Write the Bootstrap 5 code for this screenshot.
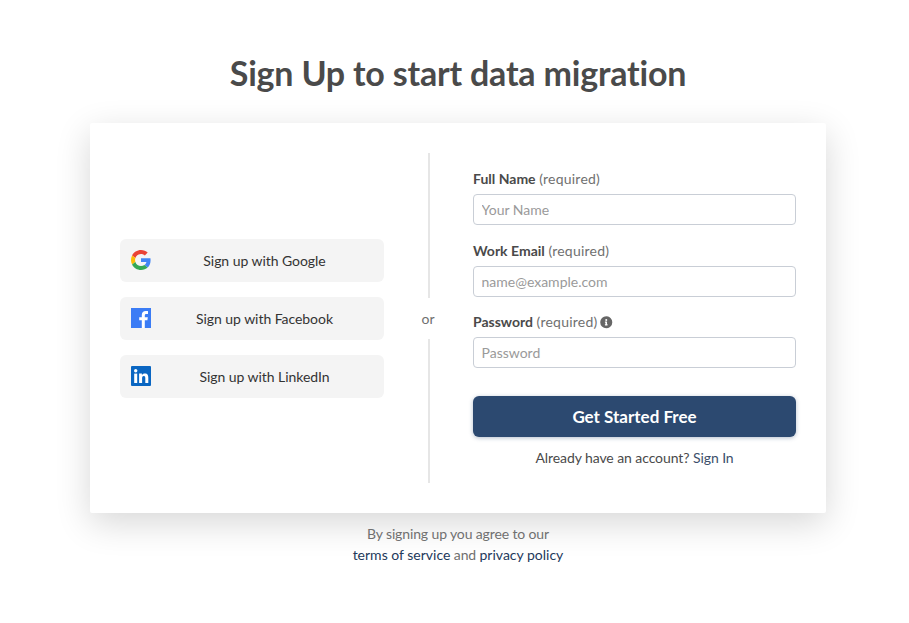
<!DOCTYPE html>
<html lang="en">
<head>
<meta charset="utf-8">
<title>Sign Up</title>
<link href="https://cdn.jsdelivr.net/npm/bootstrap@5.3.0/dist/css/bootstrap.min.css" rel="stylesheet">
<style>
body{font-family:Lato,sans-serif;background:#fff;color:#444;font-size:14px;}
.page-wrap{width:736px;margin-left:90px;padding-top:49px;}
.page-title{font-family:Lato,sans-serif;font-size:34px;font-weight:700;line-height:48px;letter-spacing:-.2px;font-variant-ligatures:none;color:#4a4a4a;text-align:center;margin:0 0 26px;}
.panel{height:390px;padding:30px;background:#fff;border-radius:2px;box-shadow:0 10px 35px rgba(0,0,0,.16);}
.col-social{width:264px;gap:15px;}
.social-btn{position:relative;height:43px;background:#f4f4f4;border-radius:6px;color:#333;font-size:14px;letter-spacing:-.05px;text-decoration:none;padding-left:25px;}
.social-btn svg{position:absolute;left:11px;top:11.5px;width:20px;height:20px;}
.col-or{width:89px;color:#707070;font-size:14px;}
.or-line{flex:1;width:2px;background:#e6e6e6;}
.or-text{height:41px;margin-left:-1px;}
.col-form{width:323px;padding-top:16px;}
.field-label{display:block;font-size:14px;line-height:20px;margin-bottom:5px;color:#707070;}
.field-label b{color:#4a4a4a;font-weight:700;}
.req-note{letter-spacing:.22px;}
.field-input.form-control{height:30.5px;padding:4px 7.5px;font-size:14px;font-family:Lato,sans-serif;border:1px solid #c9ced6;border-radius:4px;color:#444;}
.field-input.form-control::placeholder{color:#9a9a9a;opacity:1;}
.field-gap-a{margin-bottom:16.5px;}
.field-gap-b{margin-bottom:15.5px;}
.submit-btn.btn{height:41px;margin-top:28.5px;width:100%;background:#2c4970;border:0;border-radius:6px;color:#fff;font-size:17px;font-weight:700;box-shadow:0 1px 4px rgba(44,73,112,.35);padding:0;}
.signin-note{margin-top:11px;line-height:20px;text-align:center;color:#4a4a4a;letter-spacing:-.08px;}
.signin-note a{color:#3c4f6b;text-decoration:none;}
.legal{margin-top:10px;line-height:21px;text-align:center;color:#707070;letter-spacing:-.13px;}
.legal a{color:#23395b;text-decoration:none;letter-spacing:0;}
.info-icon{width:12.5px;height:12.5px;vertical-align:-1.5px;margin-left:-1px;}
</style>
</head>
<body>
<div class="page-wrap">
  <h1 class="page-title">Sign Up to start data migration</h1>
  <div class="panel d-flex">
    <div class="col-social d-flex flex-column justify-content-center flex-shrink-0">
      <a href="#" class="social-btn d-flex align-items-center justify-content-center">
        <svg viewBox="0 0 48 48"><path fill="#EA4335" d="M24 9.5c3.54 0 6.71 1.22 9.21 3.6l6.85-6.85C35.9 2.38 30.47 0 24 0 14.62 0 6.51 5.38 2.56 13.22l7.98 6.19C12.43 13.72 17.74 9.5 24 9.5z"/><path fill="#4285F4" d="M46.98 24.55c0-1.57-.15-3.09-.38-4.55H24v9.02h12.94c-.58 2.96-2.26 5.48-4.78 7.18l7.73 6c4.51-4.18 7.09-10.36 7.09-17.65z"/><path fill="#FBBC05" d="M10.53 28.59c-.48-1.45-.76-2.99-.76-4.59s.27-3.14.76-4.59l-7.98-6.19C.92 16.46 0 20.12 0 24c0 3.88.92 7.54 2.56 10.78l7.97-6.19z"/><path fill="#34A853" d="M24 48c6.48 0 11.93-2.13 15.89-5.81l-7.73-6c-2.15 1.45-4.92 2.3-8.16 2.3-6.26 0-11.57-4.22-13.47-9.91l-7.98 6.19C6.51 42.62 14.62 48 24 48z"/></svg>
        Sign up with Google
      </a>
      <a href="#" class="social-btn d-flex align-items-center justify-content-center">
        <svg viewBox="0 0 20 20"><rect width="20" height="20" fill="#3b7cf5"/><path fill="#fff" d="M13.8 20v-7.7h2.6l.4-3h-3V7.4c0-.9.3-1.5 1.5-1.5H17V3.2c-.3 0-1.2-.1-2.3-.1-2.3 0-3.9 1.4-3.9 4v2.2H8.2v3h2.6V20z"/></svg>
        Sign up with Facebook
      </a>
      <a href="#" class="social-btn d-flex align-items-center justify-content-center">
        <svg viewBox="0 0 20 20"><rect width="20" height="20" rx="1" fill="#0a66c2"/><circle cx="4.7" cy="4.7" r="1.7" fill="#fff"/><rect x="3.2" y="7.6" width="3" height="9.4" fill="#fff"/><path fill="#fff" d="M8.1 7.6h2.8v1.3c.5-.8 1.5-1.5 3-1.5 2.9 0 3.4 1.9 3.4 4.4V17h-3v-4.6c0-1.1 0-2.5-1.5-2.5s-1.7 1.2-1.7 2.4V17h-3z"/></svg>
        Sign up with LinkedIn
      </a>
    </div>
    <div class="col-or d-flex flex-column align-items-center flex-shrink-0">
      <div class="or-line"></div>
      <div class="or-text d-flex align-items-center">or</div>
      <div class="or-line"></div>
    </div>
    <form class="col-form flex-shrink-0">
      <div class="field-gap-a">
        <label class="field-label"><b>Full Name</b> <span class="req-note">(required)</span></label>
        <input class="form-control field-input" type="text" placeholder="Your Name">
      </div>
      <div class="field-gap-b">
        <label class="field-label"><b>Work Email</b> <span class="req-note">(required)</span></label>
        <input class="form-control field-input" type="email" placeholder="name@example.com">
      </div>
      <div>
        <label class="field-label"><b>Password</b> <span class="req-note">(required)</span>
          <svg class="info-icon" viewBox="0 0 512 512"><path fill="#666" d="M256 8a248 248 0 1 0 0 496 248 248 0 0 0 0-496zm0 110a42 42 0 1 1 0 84 42 42 0 0 1 0-84zm56 254c0 7-5 12-12 12h-88c-7 0-12-5-12-12v-24c0-7 5-12 12-12h12v-64h-12c-7 0-12-5-12-12v-24c0-7 5-12 12-12h64c7 0 12 5 12 12v100h12c7 0 12 5 12 12z"/></svg>
        </label>
        <input class="form-control field-input" type="password" placeholder="Password">
      </div>
      <button type="button" class="btn submit-btn">Get Started Free</button>
      <div class="signin-note">Already have an account? <a href="#">Sign In</a></div>
    </form>
  </div>
  <div class="legal">By signing up you agree to our<br><a href="#">terms of service</a> and <a href="#">privacy policy</a></div>
</div>
<script src="https://cdn.jsdelivr.net/npm/bootstrap@5.3.0/dist/js/bootstrap.bundle.min.js"></script>
</body>
</html>
